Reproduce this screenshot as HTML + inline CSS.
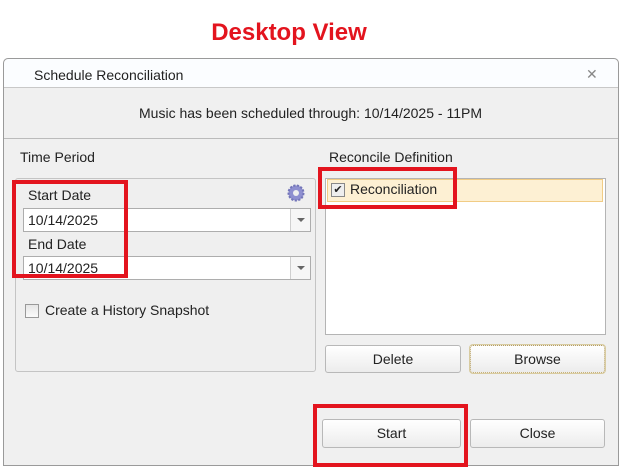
<!DOCTYPE html>
<html><head><style>
*{box-sizing:border-box;margin:0;padding:0}
body{width:621px;height:467px;background:#fff;position:relative;font-family:"Liberation Sans",sans-serif;font-size:14px;color:#222;overflow:hidden}
.a{position:absolute}
.btn{position:absolute;border:1px solid #b8b8b8;border-radius:3px;background:linear-gradient(#fff,#ececec);text-align:center;line-height:26px;font-size:14px}
.combo{position:absolute;left:23px;width:288px;height:24px;border:1px solid #adadad;background:#fff;line-height:22px;padding-left:4px}
.combo .dd{position:absolute;right:0;top:0;width:20px;height:22px;border-left:1px solid #cfcfcf;background:#f6f6f6}
.combo .dd:after{content:"";position:absolute;left:6px;top:9px;border-left:4px solid transparent;border-right:4px solid transparent;border-top:4px solid #666}
.red{position:absolute;border:4px solid #e3141e}
</style></head><body>
<div class="a" style="left:0;width:578px;top:19px;text-align:center;color:#e3141e;font-weight:bold;font-size:24px">Desktop View</div>
<div class="a" style="left:3px;top:58px;width:616px;height:408px;border:1px solid #9a9a9a;border-radius:5px 5px 0 0;background:#f0f0f0"></div>
<div class="a" style="left:4px;top:59px;width:614px;height:29px;background:#fbfdff;border-radius:5px 5px 0 0;border-bottom:1px solid #c8c8c8"></div>
<div class="a" style="left:34px;top:67px">Schedule Reconciliation</div>
<div class="a" style="left:586px;top:66px;color:#888;font-size:14px">✕</div>
<div class="a" style="left:4px;top:88px;width:614px;height:51px;border-bottom:1px solid #bbb;background:#f0f0f0"></div>
<div class="a" style="left:0;width:621px;top:105px;text-align:center">Music has been scheduled through: 10/14/2025 - 11PM</div>
<div class="a" style="left:20px;top:149px">Time Period</div>
<div class="a" style="left:15px;top:178px;width:301px;height:194px;border:1px solid #c4c4c4;border-radius:3px;background:#efefef"></div>
<div class="a" style="left:28px;top:187px">Start Date</div>
<svg class="a" style="left:287px;top:184px" width="18" height="18" viewBox="0 0 18 18"><circle cx="9" cy="9" r="7.5" fill="#8e8fd0" stroke="#7375b8" stroke-width="2" stroke-dasharray="2.2 1.4"/><circle cx="9" cy="9" r="3" fill="#efefef"/></svg>
<div class="combo" style="top:208px">10/14/2025<div class="dd"></div></div>
<div class="a" style="left:28px;top:236px">End Date</div>
<div class="combo" style="top:256px">10/14/2025<div class="dd"></div></div>
<div class="a" style="left:25px;top:304px;width:14px;height:14px;border:1px solid #999;background:linear-gradient(#e6e6e6,#fafafa)"></div>
<div class="a" style="left:45px;top:302px">Create a History Snapshot</div>
<div class="a" style="left:329px;top:149px">Reconcile Definition</div>
<div class="a" style="left:325px;top:178px;width:281px;height:157px;border:1px solid #b4b4b4;background:#fff"></div>
<div class="a" style="left:327px;top:179px;width:276px;height:23px;background:#fdf0d3;border:1px solid #f1cc85"></div>
<div class="a" style="left:331px;top:183px;width:14px;height:14px;border:1px solid #888;background:#eee;font-size:11px;line-height:12px;text-align:center">✔</div>
<div class="a" style="left:350px;top:181px">Reconciliation</div>
<div class="btn" style="left:325px;top:345px;width:136px;height:28px">Delete</div>
<div class="btn" style="left:470px;top:345px;width:135px;height:28px;border:1px dotted #b8a060;outline:1px solid #d8cba0">Browse</div>
<div class="btn" style="left:322px;top:419px;width:139px;height:29px">Start</div>
<div class="btn" style="left:470px;top:419px;width:135px;height:29px">Close</div>
<div class="red" style="left:12px;top:180px;width:116px;height:98px"></div>
<div class="red" style="left:318px;top:167px;width:139px;height:42px"></div>
<div class="red" style="left:313px;top:404px;width:155px;height:63px"></div>
</body></html>
